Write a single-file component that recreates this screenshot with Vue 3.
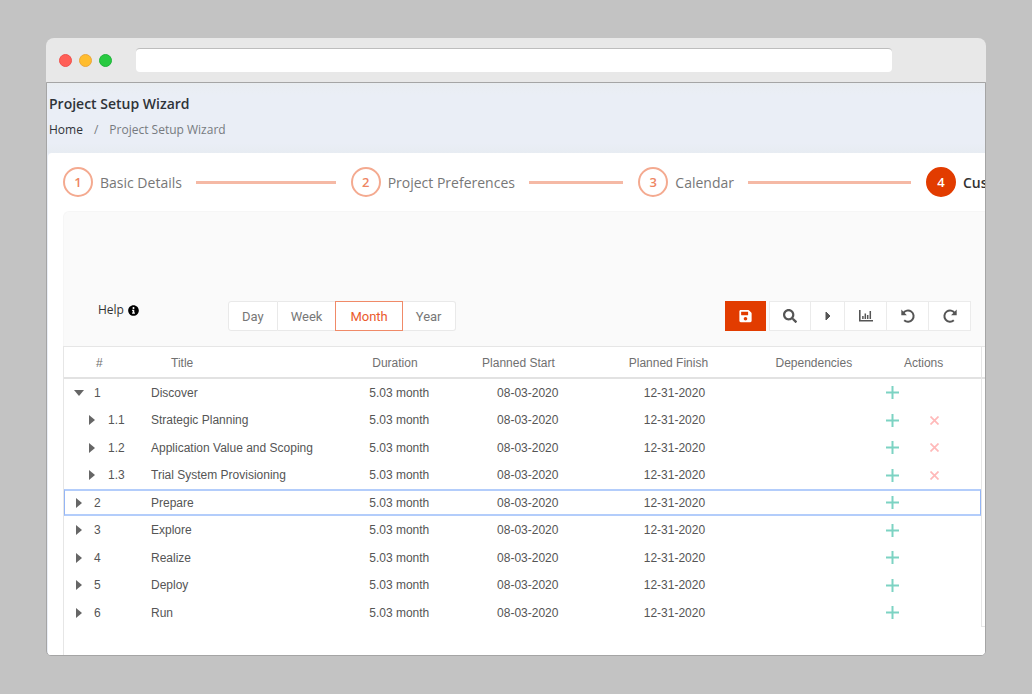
<script setup>
import { ref } from 'vue'

const steps = ['Basic Details', 'Project Preferences', 'Calendar', 'Customize']
const current = 3
const views = ['Day', 'Week', 'Month', 'Year']
const view = ref('Month')
const address = ref('')
const selected = ref('2')

const rows = [
  { id: '1', title: 'Discover', open: true },
  { id: '1.1', title: 'Strategic Planning', child: true },
  { id: '1.2', title: 'Application Value and Scoping', child: true },
  { id: '1.3', title: 'Trial System Provisioning', child: true },
  { id: '2', title: 'Prepare' },
  { id: '3', title: 'Explore' },
  { id: '4', title: 'Realize' },
  { id: '5', title: 'Deploy' },
  { id: '6', title: 'Run' },
]
</script>

<template>
  <div class="desktop">
    <div class="window">
      <div class="chrome">
        <i class="dot red"></i>
        <i class="dot amber"></i>
        <i class="dot green"></i>
        <input v-model="address" class="address" type="text" aria-label="Address" />
      </div>
      <div class="page">
        <header class="head">
          <h1>Project Setup Wizard</h1>
          <nav class="crumbs" aria-label="Breadcrumb">
            <a href="#">Home</a>
            <span class="slash">/</span>
            <span>Project Setup Wizard</span>
          </nav>
        </header>
        <main class="card">
          <ol class="steps">
            <li v-for="(s, i) in steps" :key="s" class="step" :class="{ active: i === current }">
              <span class="num">{{ i + 1 }}</span>
              <span class="label">{{ s }}</span>
              <span v-if="i < steps.length - 1" class="line"></span>
            </li>
          </ol>
          <section class="panel">
            <div class="toolbar">
              <a class="help" href="#">
                Help
                <svg viewBox="0 0 512 512" width="11" height="11"><path fill="currentColor" d="M256 8C119 8 8 119 8 256s111 248 248 248 248-111 248-248S393 8 256 8zm0 90c23 0 46 19 46 46s-19 46-46 46-46-19-46-46 19-46 46-46zm66 294c0 7-5 12-12 12H202c-7 0-12-5-12-12v-34c0-7 5-12 12-12h17v-64h-17c-7 0-12-5-12-12v-34c0-7 5-12 12-12h78c7 0 12 5 12 12v110h18c7 0 12 5 12 12v34z" /></svg>
              </a>
              <div class="views">
                <button v-for="v in views" :key="v" type="button" :class="{ on: v === view }" @click="view = v">{{ v }}</button>
              </div>
              <div class="tools">
                <button class="save" type="button" aria-label="Save">
                  <svg viewBox="0 0 448 512" width="13" height="14"><path fill="currentColor" d="M433.941 129.941l-83.882-83.882A48 48 0 0 0 316.118 32H48C21.490 32 0 53.490 0 80v352c0 26.510 21.490 48 48 48h352c26.510 0 48-21.490 48-48V163.882a48 48 0 0 0-14.059-33.941zM224 416c-35.346 0-64-28.654-64-64 0-35.346 28.654-64 64-64s64 28.654 64 64c0 35.346-28.654 64-64 64zm96-304.520V212c0 6.627-5.373 12-12 12H76c-6.627 0-12-5.373-12-12V108c0-6.627 5.373-12 12-12h228.520c3.183 0 6.235 1.264 8.485 3.515l3.480 3.480A11.996 11.996 0 0 1 320 111.480z" /></svg>
                </button>
                <div class="group">
                  <button type="button" aria-label="Search">
                    <svg viewBox="0 0 512 512" width="14" height="14"><path fill="currentColor" d="M505 442.700L405.300 343c-4.500-4.500-10.600-7-17-7H372c27.600-35.300 44-79.700 44-128C416 93.100 322.900 0 208 0S0 93.100 0 208s93.100 208 208 208c48.300 0 92.700-16.400 128-44v16.300c0 6.400 2.500 12.500 7 17l99.700 99.700c9.400 9.400 24.600 9.400 33.900 0l28.300-28.300c9.400-9.400 9.400-24.600.1-34zM208 336c-70.700 0-128-57.200-128-128 0-70.700 57.200-128 128-128 70.700 0 128 57.200 128 128 0 70.700-57.200 128-128 128z" /></svg>
                  </button>
                  <button class="narrow" type="button" aria-label="Next">
                    <svg viewBox="0 0 6 10" width="6" height="10"><path fill="currentColor" d="M1 1l4 4-4 4z" stroke="currentColor" stroke-linejoin="round" /></svg>
                  </button>
                  <button type="button" aria-label="Chart">
                    <svg viewBox="0 0 14 12" width="14" height="12"><path fill="none" stroke="currentColor" stroke-width="1.600" d="M.8 0v10.700H14" /><path fill="none" stroke="currentColor" stroke-width="1.500" d="M3.900 9V6M6.300 9V3.500M8.700 9V5M11.300 9V1" /></svg>
                  </button>
                  <button type="button" aria-label="Undo">
                    <svg viewBox="0 0 14 14" width="14" height="14"><path fill="none" stroke="currentColor" stroke-width="2" d="M2.200 4.200A5.600 5.600 0 1 1 3.200 11.200" /><path fill="currentColor" d="M.3.600L5.900 6.200H.3z" /></svg>
                  </button>
                  <button type="button" aria-label="Redo">
                    <svg viewBox="0 0 14 14" width="14" height="14"><path fill="none" stroke="currentColor" stroke-width="2" d="M11.800 4.200A5.600 5.600 0 1 0 10.800 11.200" /><path fill="currentColor" d="M13.700.600L8.100 6.200h5.600z" /></svg>
                  </button>
                </div>
              </div>
            </div>
          </section>
          <div class="sheet">
            <table>
              <colgroup>
                <col class="w-num" /><col class="w-title" /><col class="w-dur" /><col class="w-date" /><col class="w-date" /><col class="w-dep" /><col />
              </colgroup>
              <thead>
                <tr>
                  <th class="c-num">#</th>
                  <th class="c-title">Title</th>
                  <th class="c-dur">Duration</th>
                  <th class="c-date">Planned Start</th>
                  <th class="c-date">Planned Finish</th>
                  <th class="c-date">Dependencies</th>
                  <th class="c-act">Actions</th>
                </tr>
              </thead>
              <tbody>
                <tr v-for="r in rows" :key="r.id" :class="{ child: r.child, selected: r.id === selected }" @click="selected = r.id">
                  <td class="c-num">
                    <span class="tree">
                      <button type="button" class="caret" :class="{ open: r.open }" :aria-label="'Toggle ' + r.title"></button>
                      <span>{{ r.id }}</span>
                    </span>
                  </td>
                  <td class="c-title">{{ r.title }}</td>
                  <td class="c-dur">5.03 month</td>
                  <td class="c-date">08-03-2020</td>
                  <td class="c-date">12-31-2020</td>
                  <td></td>
                  <td class="c-act">
                    <span class="acts">
                      <button type="button" class="add" aria-label="Add">
                        <svg viewBox="0 0 13 13" width="13" height="13"><path stroke="currentColor" stroke-width="2" d="M6.500 0v13M0 6.500h13" /></svg>
                      </button>
                      <button v-if="r.child" type="button" class="del" aria-label="Delete">
                        <svg viewBox="0 0 9 9" width="9" height="9"><path stroke="currentColor" stroke-width="1.700" d="M.5.5l8 8M8.500.5l-8 8" /></svg>
                      </button>
                    </span>
                  </td>
                </tr>
              </tbody>
            </table>
            <div class="gantt"><div class="gantt-head"></div></div>
          </div>
        </main>
      </div>
    </div>
  </div>
</template>

<style>
body {
  background: #c3c3c3;
}
</style>

<style scoped>
* {
  box-sizing: border-box;
}
.desktop {
  min-height: 100vh;
  padding: 38px 46px;
  display: flex;
  background: #c3c3c3;
  font-family: "Open Sans", "Noto Sans", sans-serif;
}
.window {
  flex: 1;
  min-width: 0;
  display: flex;
  flex-direction: column;
}
button {
  font: inherit;
  color: inherit;
  margin: 0;
  padding: 0;
  border: 0;
  background: none;
  display: flex;
  align-items: center;
  justify-content: center;
}
.chrome {
  height: 44px;
  display: flex;
  align-items: center;
  gap: 7px;
  padding: 0 94px 0 13px;
  background: #e8e8e8;
  border-radius: 8px 8px 0 0;
}
.dot {
  width: 13px;
  height: 13px;
  border-radius: 50%;
}
.red { background: #ff5f57; border: 1px solid #f0504c; }
.amber { background: #ffbd2e; border: 1px solid #eba73a; }
.green { background: #28ca41; border: 1px solid #1fb43a; }
.address {
  flex: 1;
  min-width: 0;
  height: 24px;
  margin-left: 17px;
  padding: 0 8px;
  border: 0;
  border-top: 1px solid #bdbdbd;
  border-radius: 4px;
  background: #fff;
  outline: none;
}
.page {
  flex: 1;
  display: flex;
  flex-direction: column;
  overflow: hidden;
  border: 1px solid #a5a5a5;
  border-radius: 0 0 5px 5px;
  background: #eaeef6;
}
.head {
  height: 70px;
  padding: 11px 2px 0;
  color: #2f3338;
  background: linear-gradient(#e9edf1, #eaeef6 12px, #eaeef6 60px, #e7ecf2);
}
h1 {
  margin: 0;
  font-size: 14px;
  line-height: 20px;
  font-weight: 600;
}
.crumbs {
  display: flex;
  gap: 11px;
  margin-top: 6px;
  font-size: 12px;
  line-height: 20px;
  color: #777b80;
}
.crumbs a {
  color: #2f3338;
  text-decoration: none;
}
.card {
  flex: 1;
  display: flex;
  flex-direction: column;
  margin-left: 1px;
  padding-left: 15px;
  background: #fff;
  border-top-left-radius: 4px;
  overflow: hidden;
}
.steps {
  display: flex;
  margin: 0;
  padding: 14px 0;
  list-style: none;
}
.step {
  flex: 0 0 31.2%;
  display: flex;
  align-items: center;
  padding-right: 15px;
  font-size: 14px;
  line-height: 20px;
  color: #777;
  white-space: nowrap;
}
.label { padding-top: 2px; }
.num {
  width: 30px;
  height: 30px;
  margin-right: 7px;
  flex: none;
  display: flex;
  align-items: center;
  justify-content: center;
  border: 2px solid #f4aa90;
  border-radius: 50%;
  color: #ee8563;
  font-size: 13px;
  font-weight: 600;
}
.line {
  flex: 1;
  height: 3px;
  margin-left: 14px;
  background: #f5b9a5;
}
.active { color: #333; font-weight: 600; }
.active .num {
  background: #e23c00;
  border-color: #e23c00;
  color: #fff;
}
.panel {
  display: flex;
  align-items: flex-end;
  height: 135px;
  padding: 0 14px 15px 34px;
  background: #fafafa;
  border-left: 1px solid #f6f6f6;
  border-top: 1px solid #f6f6f6;
  border-top-left-radius: 6px;
}
.toolbar {
  flex: 1;
  display: flex;
  align-items: flex-end;
}
.help {
  flex: 0 0 130px;
  display: flex;
  align-items: center;
  align-self: flex-start;
  gap: 4px;
  font-size: 12px;
  line-height: 18px;
  color: #333;
  text-decoration: none;
}
.help svg { color: #000; }
.views {
  display: flex;
  font-family: Roboto, "Liberation Sans", sans-serif;
  font-size: 13px;
  color: #777;
}
.views button {
  height: 30px;
  padding: 0 13px;
  background: #fff;
  border: 1px solid #e9e9e9;
  border-left-width: 0;
}
.views button:first-child {
  border-left-width: 1px;
  border-radius: 3px 0 0 3px;
}
.views button:last-child { border-radius: 0 3px 3px 0; }
.views button.on {
  margin-left: -1px;
  padding: 0 14px;
  color: #ea5a2c;
  border: 1px solid #f08a68;
}
.tools {
  display: flex;
  gap: 3px;
  margin-left: auto;
  color: #555;
}
.tools button {
  width: 42px;
  height: 30px;
  background: #fff;
  border: 1px solid #ebebeb;
}
.tools .save {
  width: 41px;
  background: #e23c00;
  border-color: #e23c00;
  color: #fff;
}
.group { display: flex; }
.group button + button { border-left-width: 0; }
.tools .narrow { width: 34px; }
.sheet {
  flex: 1;
  display: flex;
  align-items: flex-start;
  border-left: 1px solid #e6e6e6;
}
table {
  flex: 1;
  table-layout: fixed;
  border-collapse: separate;
  border-spacing: 0;
  font-family: "Liberation Sans", Arial, sans-serif;
  font-size: 12px;
  line-height: 16px;
  color: #555;
}
.w-num { width: 8.4%; }
.w-title { width: 23.8%; }
.w-dur { width: 12.3%; }
.w-date { width: 16%; }
.w-dep { width: 12.7%; }
th,
td {
  padding: 0;
  text-align: left;
  font-weight: 400;
  white-space: nowrap;
}
th {
  height: 33px;
  padding-top: 2px;
  border-top: 1px solid #e6e6e6;
  border-bottom: 2px solid #e2e2e2;
  color: #707070;
}
th.c-num { padding-left: 32px; }
th.c-title { padding-left: 30px; }
th.c-dur { padding-left: 13px; }
th.c-date { padding-left: 10px; }
th.c-act { padding-left: 22px; }
td.c-title,
td.c-dur { padding-left: 10px; }
td.c-date { padding-left: 25px; }
td.c-act { padding-left: 4px; }
td { height: 27px; }
tr:nth-child(even) td { height: 28px; }
.selected td {
  border-top: 2px solid #b3cdfb;
  border-bottom: 2px solid #b3cdfb;
}
.selected td:first-child { border-left: 1px solid #94b5f5; }
.selected td:last-child { border-right: 1px solid #94b5f5; }
.tree {
  display: flex;
  align-items: center;
  gap: 11px;
  padding-left: 10px;
}
.child .tree { padding-left: 23px; gap: 12px; }
.selected .tree { padding-left: 9px; }
.caret {
  width: 9px;
  height: 9px;
}
.caret::before {
  content: "";
  border-left: 6px solid #666;
  border-top: 5px solid transparent;
  border-bottom: 5px solid transparent;
}
.caret.open::before {
  border-top: 6px solid #666;
  border-bottom: 0;
  border-left: 5px solid transparent;
  border-right: 5px solid transparent;
}
.acts {
  display: flex;
  align-items: center;
  gap: 31px;
}
.add { color: #7dd3c3; }
.del { color: #ffb9b9; }
.gantt {
  width: 4px;
  height: 281px;
  border: solid #e6e6e6;
  border-width: 1px 0 1px 1px;
}
.gantt-head {
  height: 32px;
  border-bottom: 2px solid #e2e2e2;
}
</style>
